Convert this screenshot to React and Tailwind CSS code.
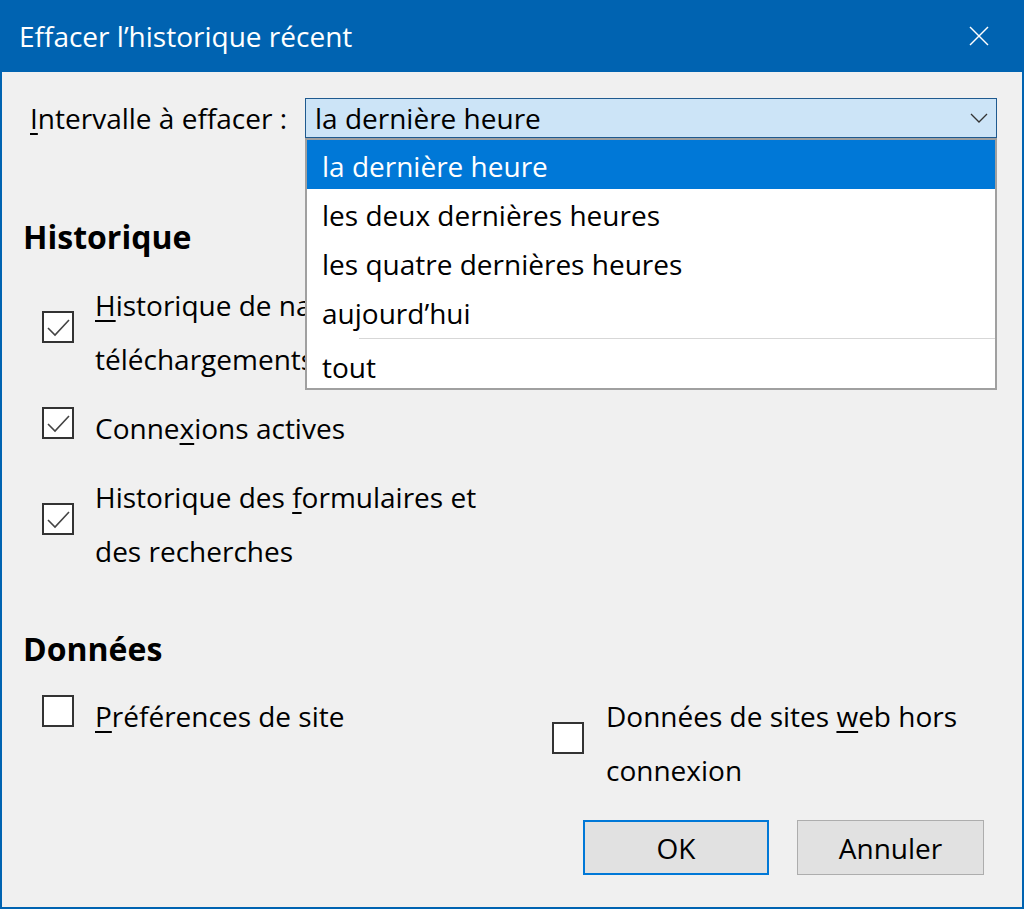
import { useState } from 'react';

const ranges = [
    'la dernière heure',
    'les deux dernières heures',
    'les quatre dernières heures',
    'aujourd\u2019hui',
];

const CheckBox = ({ checked }) => (
    <div className="w-[32px] h-[32px] mb-[11px] shrink-0 border-2 border-[#333333] bg-white flex items-center justify-center">
        {checked && (
            <svg width="28" height="28" viewBox="0 0 28 28" fill="none">
                <polyline points="4,15 11,22 25,7" stroke="#444444" strokeWidth="1.6" />
            </svg>
        )}
    </div>
);

const Option = ({ checked, gap = 'gap-[21px]', children }) => (
    <div className={`flex items-center ${gap}`}>
        <CheckBox checked={checked} />
        <div className="leading-[54px]">{children}</div>
    </div>
);

const App = () => {
    const [range] = useState(ranges[0]);

    return (
        <div
            className="w-[1024px] h-[909px] flex flex-col bg-[#0063b1] text-black text-[28px]"
            style={{ fontFamily: '"Open Sans", "Noto Sans", sans-serif' }}
        >
            {/* Barre de titre */}
            <div className="h-[72px] shrink-0 flex items-center justify-between pl-[19px] pr-[35px] text-white">
                <span className="text-[28px]">Effacer l’historique récent</span>
                <svg width="20" height="20" viewBox="0 0 20 20" stroke="white" strokeWidth="1.5">
                    <line x1="1" y1="1" x2="19" y2="19" />
                    <line x1="19" y1="1" x2="1" y2="19" />
                </svg>
            </div>

            <div className="flex-1 mx-[2px] mb-[2px] bg-[#f0f0f0] flex flex-col">
                {/* Intervalle */}
                <div className="relative mt-[25px] flex items-center">
                    <span className="w-[303px] pl-[28px]">
                        <u className="underline-offset-4">I</u>ntervalle à effacer :
                    </span>
                    <div className="w-[692px] h-[40px] border border-[#1f5a8f] bg-[#cce4f7] flex items-center justify-between pl-[9px] pr-[8px]">
                        <span>{range}</span>
                        <svg width="18" height="10" viewBox="0 0 18 10" fill="none">
                            <polyline points="1,1 9,9 17,1" stroke="#333333" strokeWidth="1.3" />
                        </svg>
                    </div>

                    {/* Liste déroulante ouverte */}
                    <div className="absolute left-[303px] top-[41px] w-[692px] border-2 border-[#a0a0a0] bg-white z-10">
                        {ranges.map(r => (
                            <div
                                key={r}
                                className={`h-[49px] flex items-center pl-[15px] pt-[2px] ${r === range ? 'bg-[#0078d7] text-white' : ''}`}
                            >
                                {r}
                            </div>
                        ))}
                        <div className="py-[2px] pl-[52px]">
                            <div className="h-px bg-[#d7d7d7]"></div>
                        </div>
                        <div className="h-[47px] flex items-center pl-[15px] pt-[4px]">tout</div>
                    </div>
                </div>

                {/* Historique */}
                <h2 className="mt-[78px] pl-[21px] h-[40px] flex items-center text-[32px] font-bold">Historique</h2>
                <div className="mt-[21px] pl-[40px] flex flex-col gap-[15px]">
                    <Option checked>
                        <u className="underline-offset-4">H</u>istorique de navigation et des<br />téléchargements
                    </Option>
                    <Option checked>
                        Conne<u className="underline-offset-4">x</u>ions actives
                    </Option>
                    <Option checked>
                        Historique des <u className="underline-offset-4">f</u>ormulaires et<br />des recherches
                    </Option>
                </div>

                {/* Données */}
                <h2 className="mt-[51px] pl-[21px] h-[40px] flex items-center text-[32px] font-bold">Données</h2>
                <div className="mt-[20px] pl-[40px] flex items-start">
                    <div className="w-[510px]">
                        <Option>
                            <u className="underline-offset-4">P</u>références de site
                        </Option>
                    </div>
                    <Option gap="gap-[22px]">
                        Données de sites <u className="underline-offset-4">w</u>eb hors<br />connexion
                    </Option>
                </div>

                {/* Boutons */}
                <div className="mt-[23px] pr-[38px] flex justify-end gap-[28px]">
                    <button className="w-[186px] h-[55px] border-2 border-[#0078d7] bg-[#e1e1e1]">OK</button>
                    <button className="w-[187px] h-[55px] border border-[#adadad] bg-[#e1e1e1]">Annuler</button>
                </div>
            </div>
        </div>
    );
};

export default App;
